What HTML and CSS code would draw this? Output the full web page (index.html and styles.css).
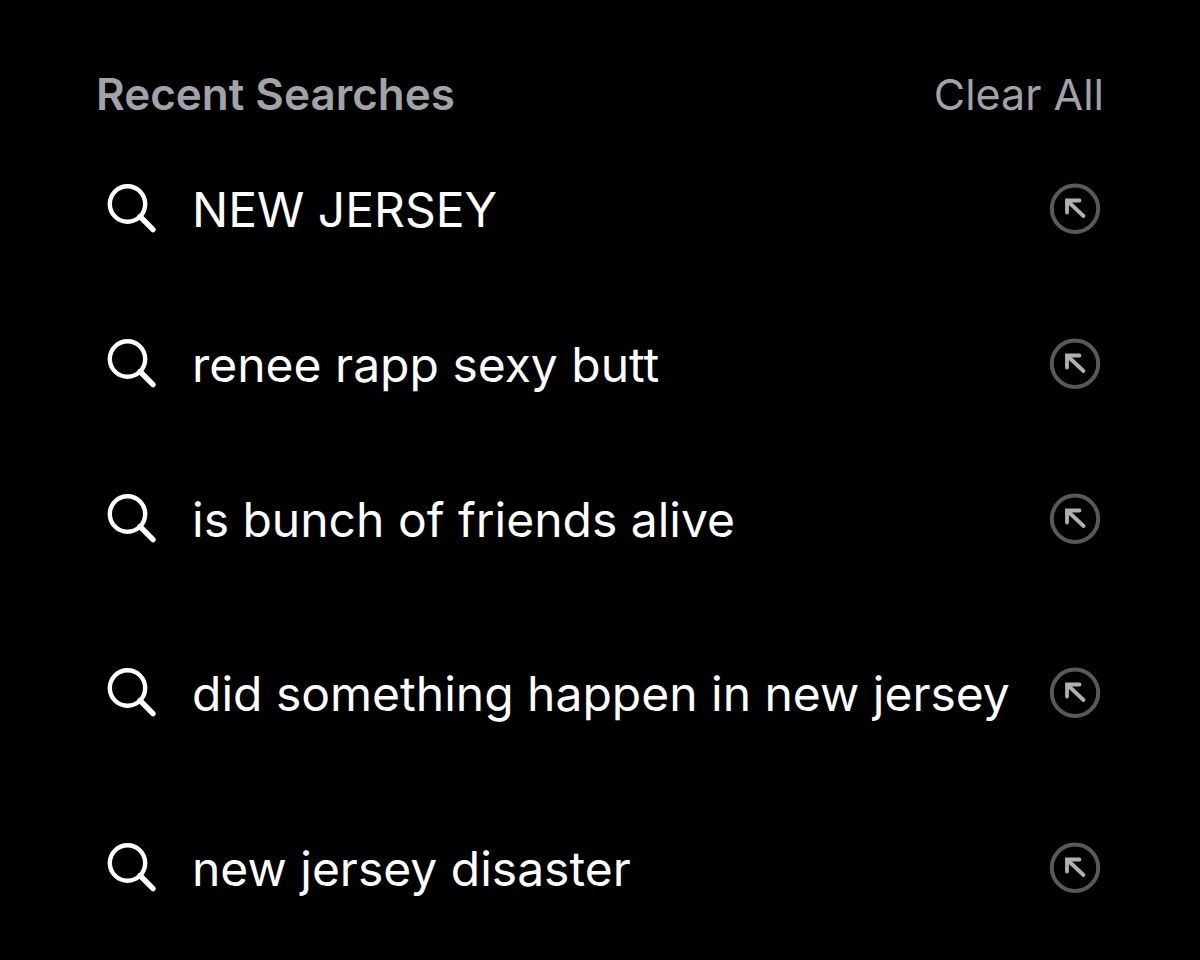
FILE: index.html
```html
<!DOCTYPE html>
<html lang="en">
<head>
  <meta charset="UTF-8">
  <meta name="viewport" content="width=device-width, initial-scale=1.0">
  <title>Recent Searches</title>
  <link rel="stylesheet" href="styles.css">
</head>
<body>
  <svg class="sprite" aria-hidden="true">
    <symbol id="search" viewBox="0 0 50 50">
      <circle cx="20.5" cy="20" r="17.7" fill="none" stroke="currentColor" stroke-width="4.4"/>
      <path d="M33 32.5L46 45.7" stroke="currentColor" stroke-width="5.4" stroke-linecap="round"/>
    </symbol>
    <symbol id="fill" viewBox="0 0 52 52">
      <circle cx="26" cy="25.7" r="23.2" fill="none" stroke="#59595c" stroke-width="4"/>
      <path d="M18 29.5V17.5H30.5M18 17.5L34.5 33" fill="none" stroke="currentColor" stroke-width="3.8" stroke-linecap="round" stroke-linejoin="miter"/>
    </symbol>
  </svg>

  <main>
    <header class="top">
      <h2>Recent Searches</h2>
      <button type="button" class="clear">Clear All</button>
    </header>

    <ul class="searches">
      <li class="row">
        <a href="#" class="query"><svg class="icon"><use href="#search"/></svg><span>NEW JERSEY</span></a>
        <button type="button" class="fill" aria-label="Edit search"><svg><use href="#fill"/></svg></button>
      </li>
      <li class="row">
        <a href="#" class="query"><svg class="icon"><use href="#search"/></svg><span>renee rapp sexy butt</span></a>
        <button type="button" class="fill" aria-label="Edit search"><svg><use href="#fill"/></svg></button>
      </li>
      <li class="row">
        <a href="#" class="query"><svg class="icon"><use href="#search"/></svg><span>is bunch of friends alive</span></a>
        <button type="button" class="fill" aria-label="Edit search"><svg><use href="#fill"/></svg></button>
      </li>
      <li class="row tall">
        <a href="#" class="query"><svg class="icon"><use href="#search"/></svg><span>did something happen in new jersey</span></a>
        <button type="button" class="fill" aria-label="Edit search"><svg><use href="#fill"/></svg></button>
      </li>
      <li class="row">
        <a href="#" class="query"><svg class="icon"><use href="#search"/></svg><span>new jersey disaster</span></a>
        <button type="button" class="fill" aria-label="Edit search"><svg><use href="#fill"/></svg></button>
      </li>
    </ul>
  </main>
</body>
</html>
```
FILE: styles.css
```css
* { box-sizing: border-box; }
body { margin: 0; background: #000; color: #fff; font-family: Inter, "Liberation Sans", sans-serif; }
main { padding: 64px 96px 0; }
button { padding: 0; border: none; background: none; font-family: inherit; cursor: pointer; }
.sprite { display: none; }

.top { display: flex; justify-content: space-between; align-items: center; height: 60px; margin-bottom: 7px; color: #a3a2a8; }
.top h2 { margin: 0; font-size: 44px; font-weight: 600; }
.clear { font-size: 43px; color: inherit; }

.searches { margin: 0; padding: 0; list-style: none; }
.row { display: flex; align-items: center; justify-content: space-between; height: 155px; padding-left: 11px; }
.row.tall { height: 194px; }
.query { display: flex; align-items: center; gap: 35px; color: #fff; font-size: 48px; line-height: 60px; white-space: nowrap; text-decoration: none; }
.query span { padding-top: 2px; }
.icon { flex: none; width: 50px; height: 50px; }
.fill { flex: none; margin-right: 3px; color: #b0afb4; }
.fill svg { display: block; width: 52px; height: 52px; }
```
